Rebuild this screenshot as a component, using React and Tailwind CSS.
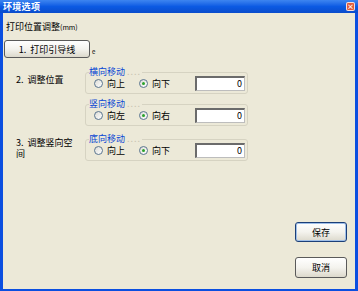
import React from "react";

const font = { fontFamily: '"Noto Sans CJK SC", "Noto Sans", sans-serif' };

function Radio({ checked, label, w }) {
  return (
    <div className={`flex items-center ${w}`}>
      <span className="w-[9px] h-[9px] rounded-full border border-[#5a7590] bg-gradient-to-br from-[#dcdcd6] to-white flex items-center justify-center">
        {checked && <span className="w-[3px] h-[3px] rounded-full bg-[#2aa22a]" />}
      </span>
      <span className="ml-[4px] text-[9px] leading-[11px] text-black">{label}</span>
    </div>
  );
}

function Group({ title, a, b, className = "" }) {
  return (
    <div className={`relative w-[163px] h-[22px] border border-[#d6d3c2] rounded-[3px] flex items-center pl-[8px] ${className}`}>
      <span className="absolute -top-[7px] left-[3px] bg-[#ECE9D8] text-[9px] leading-[11px] text-[#0a46d4] pr-[1px]">
        {title}
        <span className="text-[#c9c5b2] tracking-[1px] ml-[2px]">....</span>
      </span>
      <Radio label={a} w="w-[45px]" />
      <Radio checked label={b} w="w-[56px]" />
      <div className="w-[50px] h-[15px] bg-white border-t-2 border-l-2 border-b border-r border-t-[#6b6b6b] border-l-[#6b6b6b] border-b-[#bdbdbd] border-r-[#bdbdbd] flex items-center justify-end pr-[2px] text-[9px] leading-[11px]">
        0
      </div>
    </div>
  );
}

function XPButton({ children, className = "", def = false }) {
  return (
    <div
      className={`flex items-center justify-center rounded-[3px] border text-[9px] leading-[11px] text-black bg-gradient-to-b from-white via-[#f4f3ee] to-[#dcd9cc] ${
        def ? "border-[#1b3f78] shadow-[inset_0_0_0_1px_#9fbfe8]" : "border-[#5a5a5a]"
      } ${className}`}
    >
      {children}
    </div>
  );
}

export default function App() {
  return (
    <div className="w-[358px] h-[291px] flex flex-col bg-[#0b4fe0]" style={font}>
      <div className="h-[13px] flex items-center justify-between bg-gradient-to-b from-[#3d85f0] via-[#0b5ae3] to-[#0a4ccc] pl-[3px] pr-[3px]">
        <span className="text-white font-bold text-[9px] leading-[11px] tracking-[0.3px]">环境选项</span>
        <span className="w-[9px] h-[9px] rounded-[2px] bg-[#e05c3a] border border-white/80 flex items-center justify-center text-white text-[7px] leading-none font-bold">
          ×
        </span>
      </div>
      <div className="flex-1 mx-[3px] mb-[2px] bg-[#ECE9D8] flex flex-col">
        <div className="mt-[8px] pl-[3px] text-[9px] leading-[12px] text-black">
          打印位置调整<span className="text-[7px]">(mm)</span>
        </div>
        <div className="mt-[7px] ml-[1px] flex items-end">
          <XPButton className="w-[86px] h-[18px]">1.&nbsp;&nbsp;打印引导线</XPButton>
          <span className="ml-[2px] mb-[3px] text-[6px] leading-[6px]">e</span>
        </div>
        <div className="flex">
          <div className="w-[82px] pt-[16px] pl-[13px] text-[9px] leading-[12px]">2.&nbsp;&nbsp;调整位置</div>
          <div className="flex flex-col">
            <Group title="横向移动" a="向上" b="向下" className="mt-[14px]" />
            <Group title="竖向移动" a="向左" b="向右" className="mt-[10px]" />
          </div>
        </div>
        <div className="flex">
          <div className="w-[82px] pt-[11px] pl-[13px] pr-[4px] text-[9px] leading-[11px]">3.&nbsp;&nbsp;调整竖向空间</div>
          <div className="flex flex-col">
            <Group title="底向移动" a="向上" b="向下" className="mt-[13px]" />
          </div>
        </div>
        <div className="mt-auto mb-[11px] mr-[8px] flex flex-col items-end">
          <XPButton def className="w-[52px] h-[20px]">保存</XPButton>
          <XPButton className="w-[52px] h-[21px] mt-[15px]">取消</XPButton>
        </div>
      </div>
    </div>
  );
}
